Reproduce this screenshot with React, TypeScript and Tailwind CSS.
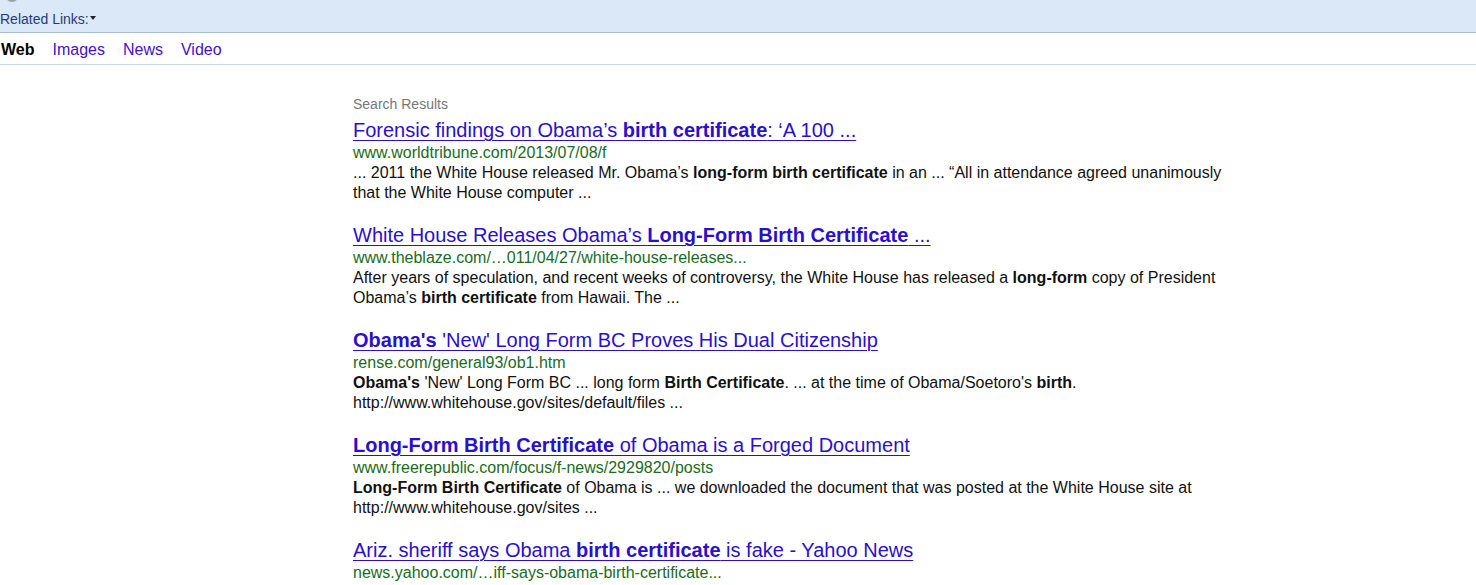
export default function App() {
  const results = [
    {
      title: (
        <>
          Forensic findings on Obama’s <b>birth certificate</b>: ‘A 100 ...
        </>
      ),
      url: "www.worldtribune.com/2013/07/08/f",
      snippet: (
        <>
          ... 2011 the White House released Mr. Obama’s <b>long-form birth certificate</b> in an ... “All in attendance agreed unanimously that the White House computer ...
        </>
      ),
    },
    {
      title: (
        <>
          White House Releases Obama’s <b>Long-Form Birth Certificate</b> ...
        </>
      ),
      url: "www.theblaze.com/…011/04/27/white-house-releases...",
      snippet: (
        <>
          After years of speculation, and recent weeks of controversy, the White House has released a <b>long-form</b> copy of President Obama’s <b>birth certificate</b> from Hawaii. The ...
        </>
      ),
    },
    {
      title: (
        <>
          <b>Obama's</b> 'New' Long Form BC Proves His Dual Citizenship
        </>
      ),
      url: "rense.com/general93/ob1.htm",
      snippet: (
        <>
          <b>Obama's</b> 'New' Long Form BC ... long form <b>Birth Certificate</b>. ... at the time of Obama/Soetoro's <b>birth</b>. http://www.whitehouse.gov/sites/default/files ...
        </>
      ),
    },
    {
      title: (
        <>
          <b>Long-Form Birth Certificate</b> of Obama is a Forged Document
        </>
      ),
      url: "www.freerepublic.com/focus/f-news/2929820/posts",
      snippet: (
        <>
          <b>Long-Form Birth Certificate</b> of Obama is ... we downloaded the document that was posted at the White House site at http://www.whitehouse.gov/sites ...
        </>
      ),
    },
    {
      title: (
        <>
          Ariz. sheriff says Obama <b>birth certificate</b> is fake - Yahoo News
        </>
      ),
      url: "news.yahoo.com/…iff-says-obama-birth-certificate...",
      snippet: null,
    },
  ];

  return (
    <div className="h-[585px] w-[1476px] overflow-hidden bg-white font-['Liberation_Sans',Arial,sans-serif]">
      {/* top bar */}
      <div className="relative flex h-[33px] items-end border-b border-[#a9bdd6] bg-[#dbe8f7] pb-[4px]">
        <div className="absolute left-[5px] top-[-12px] h-[14px] w-[14px] rounded-full bg-[#9aa4b0]" />
        <span className="flex items-center text-[14px] leading-[18px] text-[#1f3d7a]">
          Related Links:
          <svg width="6" height="4" viewBox="0 0 6 4" className="ml-[1px] mt-[-2px]">
            <path d="M0 0h6L3 4z" fill="#222" />
          </svg>
        </span>
      </div>

      {/* nav */}
      <div className="flex h-[32px] items-center gap-[18px] border-b border-[#c6d8f0] pl-[1px] pt-[3px] text-[16px]">
        <span className="font-bold text-black">Web</span>
        <span className="text-[#4412c8]">Images</span>
        <span className="text-[#4412c8]">News</span>
        <span className="text-[#4412c8]">Video</span>
      </div>

      {/* results */}
      <div className="pl-[353px] pt-[31px]">
        <div className="text-[14px] leading-[17px] text-[#777]">Search Results</div>
        <div className="mt-[4px] flex flex-col gap-[19px]">
          {results.map((r, i) => (
            <div key={i} className="w-[890px]">
              <a className="block text-[20px] leading-[26px] text-[#2a0fcc] underline decoration-1 underline-offset-[3px]">
                {r.title}
              </a>
              <div className="text-[16px] leading-[20px] text-[#1b6b22]">{r.url}</div>
              {r.snippet && (
                <div className="text-[16px] leading-[20px] text-[#111]">{r.snippet}</div>
              )}
            </div>
          ))}
        </div>
      </div>
    </div>
  );
}
